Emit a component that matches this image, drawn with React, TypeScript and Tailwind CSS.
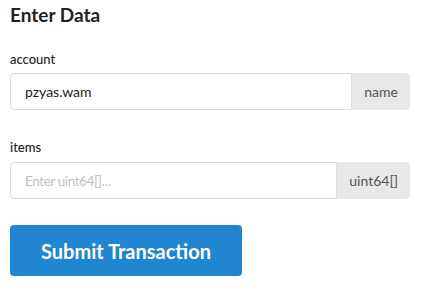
export default function App() {
  return (
    <div
      className="min-h-[292px] w-[426px] bg-white px-[10px] pt-[3px] text-[#222]"
      style={{ fontFamily: "Lato, 'Open Sans', sans-serif" }}
    >
      <h3 className="text-[19px] font-bold leading-[24px] text-[#222]">Enter Data</h3>

      <form className="mt-[24px] w-[400px]" onSubmit={(e) => e.preventDefault()}>
        <label className="block text-[13px] font-medium leading-[16px] text-[#222]">account</label>
        <div className="mt-[6px] flex h-[37px]">
          <input
            defaultValue="pzyas.wam"
            className="min-w-0 flex-1 rounded-l-[4px] border border-[#dededf] px-[14px] text-[14px] text-[#222] outline-none"
          />
          <span className="flex items-center rounded-r-[4px] bg-[#e8e8e8] px-[12px] text-[14px] text-[#555]">
            name
          </span>
        </div>

        <label className="mt-[29px] block text-[13px] font-medium leading-[16px] text-[#222]">items</label>
        <div className="mt-[7px] flex h-[37px]">
          <input
            placeholder="Enter uint64[]…"
            className="min-w-0 flex-1 rounded-l-[4px] border border-[#dededf] px-[14px] text-[14px] text-[#222] outline-none placeholder:text-[13.5px] placeholder:tracking-[-0.4px] placeholder:text-[#bfbfbf]"
          />
          <span className="flex items-center rounded-r-[4px] bg-[#e8e8e8] px-[12px] text-[14px] text-[#555]">
            uint64[]
          </span>
        </div>

        <button
          type="submit"
          className="mt-[26px] h-[51px] w-[232px] rounded-[4px] bg-[#2185d0] text-[20px] font-bold text-white"
        >
          Submit Transaction
        </button>
      </form>
    </div>
  );
}
